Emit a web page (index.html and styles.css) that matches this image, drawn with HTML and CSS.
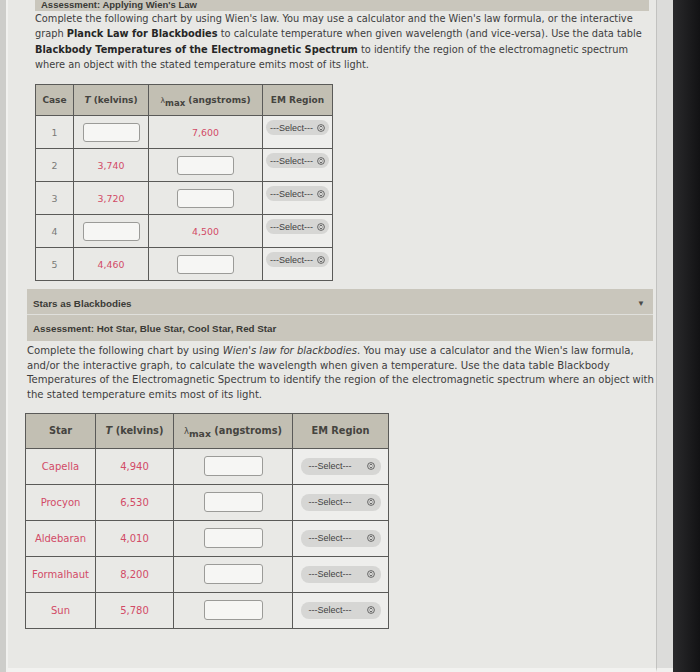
FILE: index.html
```html
<!DOCTYPE html>
<html>
<head>
<meta charset="utf-8">
<link rel="stylesheet" href="styles.css">
</head>
<body>
<div class="screen">
  <div class="left-edge"></div>
  <div class="panel">
    <div class="section1">
      <div class="bar bar-top"><span>Assessment: Applying Wien's Law</span></div>
      <p class="para para1">Complete the following chart by using Wien's law. You may use a calculator and the Wien's law formula, or the interactive graph <b>Planck Law for Blackbodies</b> to calculate temperature when given wavelength (and vice-versa). Use the data table <b>Blackbody Temperatures of the Electromagnetic Spectrum</b> to identify the region of the electromagnetic spectrum where an object with the stated temperature emits most of its light.</p>
      <table class="grid grid1">
        <colgroup><col class="c1a"><col class="c1b"><col class="c1c"><col class="c1d"></colgroup>
        <thead>
          <tr><th>Case</th><th><i>T</i> (kelvins)</th><th><span class="lam">λ</span><sub>max</sub> (angstroms)</th><th>EM Region</th></tr>
        </thead>
        <tbody>
          <tr><td class="num">1</td><td><span class="box"></span></td><td class="red">7,600</td><td class="em"><span class="sel">---Select---<svg viewBox="0 0 8 8"><circle cx="4" cy="4" r="3.4"/><path d="M2.6 3.3 L4 2 L5.4 3.3 M2.6 4.7 L4 6 L5.4 4.7"/></svg></span></td></tr>
          <tr><td class="num">2</td><td class="red">3,740</td><td><span class="box"></span></td><td class="em"><span class="sel">---Select---<svg viewBox="0 0 8 8"><circle cx="4" cy="4" r="3.4"/><path d="M2.6 3.3 L4 2 L5.4 3.3 M2.6 4.7 L4 6 L5.4 4.7"/></svg></span></td></tr>
          <tr><td class="num">3</td><td class="red">3,720</td><td><span class="box"></span></td><td class="em"><span class="sel">---Select---<svg viewBox="0 0 8 8"><circle cx="4" cy="4" r="3.4"/><path d="M2.6 3.3 L4 2 L5.4 3.3 M2.6 4.7 L4 6 L5.4 4.7"/></svg></span></td></tr>
          <tr><td class="num">4</td><td><span class="box"></span></td><td class="red">4,500</td><td class="em"><span class="sel">---Select---<svg viewBox="0 0 8 8"><circle cx="4" cy="4" r="3.4"/><path d="M2.6 3.3 L4 2 L5.4 3.3 M2.6 4.7 L4 6 L5.4 4.7"/></svg></span></td></tr>
          <tr><td class="num">5</td><td class="red">4,460</td><td><span class="box"></span></td><td class="em"><span class="sel">---Select---<svg viewBox="0 0 8 8"><circle cx="4" cy="4" r="3.4"/><path d="M2.6 3.3 L4 2 L5.4 3.3 M2.6 4.7 L4 6 L5.4 4.7"/></svg></span></td></tr>
        </tbody>
      </table>
    </div>
    <div class="bar bar-stars"><span>Stars as Blackbodies</span><span class="tri">▼</span></div>
    <div class="bar bar-assess"><span>Assessment: Hot Star, Blue Star, Cool Star, Red Star</span></div>
    <p class="para para2">Complete the following chart by using <i>Wien's law for blackbodies</i>. You may use a calculator and the Wien's law formula, and/or the interactive graph, to calculate the wavelength when given a temperature. Use the data table Blackbody Temperatures of the Electromagnetic Spectrum to identify the region of the electromagnetic spectrum where an object with the stated temperature emits most of its light.</p>
    <table class="grid grid2">
      <colgroup><col class="c2a"><col class="c2b"><col class="c2c"><col class="c2d"></colgroup>
      <thead>
        <tr><th>Star</th><th><i>T</i> (kelvins)</th><th><span class="lam">λ</span><sub>max</sub> (angstroms)</th><th>EM Region</th></tr>
      </thead>
      <tbody>
        <tr><td class="red">Capella</td><td class="red">4,940</td><td><span class="box"></span></td><td class="em"><span class="sel">---Select---<svg viewBox="0 0 8 8"><circle cx="4" cy="4" r="3.4"/><path d="M2.6 3.3 L4 2 L5.4 3.3 M2.6 4.7 L4 6 L5.4 4.7"/></svg></span></td></tr>
        <tr><td class="red">Procyon</td><td class="red">6,530</td><td><span class="box"></span></td><td class="em"><span class="sel">---Select---<svg viewBox="0 0 8 8"><circle cx="4" cy="4" r="3.4"/><path d="M2.6 3.3 L4 2 L5.4 3.3 M2.6 4.7 L4 6 L5.4 4.7"/></svg></span></td></tr>
        <tr><td class="red">Aldebaran</td><td class="red">4,010</td><td><span class="box"></span></td><td class="em"><span class="sel">---Select---<svg viewBox="0 0 8 8"><circle cx="4" cy="4" r="3.4"/><path d="M2.6 3.3 L4 2 L5.4 3.3 M2.6 4.7 L4 6 L5.4 4.7"/></svg></span></td></tr>
        <tr><td class="red">Formalhaut</td><td class="red">8,200</td><td><span class="box"></span></td><td class="em"><span class="sel">---Select---<svg viewBox="0 0 8 8"><circle cx="4" cy="4" r="3.4"/><path d="M2.6 3.3 L4 2 L5.4 3.3 M2.6 4.7 L4 6 L5.4 4.7"/></svg></span></td></tr>
        <tr><td class="red">Sun</td><td class="red">5,780</td><td><span class="box"></span></td><td class="em"><span class="sel">---Select---<svg viewBox="0 0 8 8"><circle cx="4" cy="4" r="3.4"/><path d="M2.6 3.3 L4 2 L5.4 3.3 M2.6 4.7 L4 6 L5.4 4.7"/></svg></span></td></tr>
      </tbody>
    </table>
  </div>
  <div class="right-strip"></div>
  <div class="bezel"></div>
</div>
</body>
</html>
```
FILE: styles.css
```css
html, body {
  margin: 0;
  padding: 0;
  background: #1b1b1d;
}
.screen {
  display: flex;
  width: 700px;
  height: 672px;
  overflow: hidden;
}
.left-edge {
  width: 6px;
  flex: none;
  background: #cdcdca;
  border-right: 2px solid #f1f1ef;
}
.panel {
  width: 648px;
  flex: none;
  background: #e8e8e5;
  padding-left: 19px;
  padding-right: 6px;
  box-sizing: border-box;
  box-shadow: inset 0 -4px 0 #f2f2f0;
  font-family: "DejaVu Sans", Verdana, sans-serif;
  color: #3c3c3c;
}
.right-strip {
  width: 16px;
  flex: none;
  background: #dcdcda;
  border-left: 1px solid #c2c2c0;
  border-bottom: 4px solid #f0f0ee;
}
.bezel {
  flex: 1;
  background: linear-gradient(90deg, #2a2a2c, #121214);
}
.bar {
  background: #c9c6bc;
  font-family: "Liberation Sans", Arial, sans-serif;
  font-weight: bold;
  font-size: 9.8px;
  color: #3a3a36;
  display: flex;
  align-items: center;
  justify-content: space-between;
  padding: 0 8px 0 6px;
}
.bar-top {
  height: 11px;
  font-size: 9.5px;
  line-height: 10px;
  align-items: flex-start;
  margin-right: 1px;
}
.section1 {
  padding-left: 8px;
}
.para {
  margin: 0;
  line-height: 15.3px;
  color: #3d3d3d;
}
.para b {
  color: #262626;
}
.para1 {
  font-size: 9.8px;
  padding-right: 2px;
}
.grid {
  border-collapse: collapse;
  table-layout: fixed;
}
.grid1 {
  margin-top: 12px;
  width: 297px;
}
.c1a { width: 38px; }
.c1b { width: 75px; }
.c1c { width: 114px; }
.c1d { width: 70px; }
.grid th {
  background: #c2bfb3;
  color: #45443f;
  font-weight: bold;
  border: 1px solid #5a5a58;
  padding: 0;
  white-space: nowrap;
}
.grid td {
  background: #e9e9e6;
  border: 1px solid #5a5a58;
  text-align: center;
  padding: 0;
}
.grid td.em {
  background: #eeeeec;
}
.grid1 thead tr {
  height: 31px;
}
.grid1 th {
  font-size: 9px;
}
.grid1 tbody tr {
  height: 33px;
}
.grid1 td {
  font-size: 9.4px;
}
.grid1 td.em {
  vertical-align: top;
  padding-top: 4px;
}
.lam {
  font-weight: normal;
  font-size: 0.85em;
}
.grid sub {
  font-size: 0.95em;
  vertical-align: -3px;
  line-height: 0;
}
.num {
  color: #7a7a78;
}
.red {
  color: #d24b66;
}
.box {
  display: inline-block;
  width: 55px;
  height: 17px;
  background: #f6f6f4;
  border: 1px solid #9b9b98;
  border-radius: 3px;
  vertical-align: middle;
}
.sel {
  display: inline-flex;
  align-items: center;
  justify-content: space-between;
  gap: 3px;
  background: #d6d6d4;
  border-radius: 8px;
  height: 15px;
  width: 63px;
  box-sizing: border-box;
  padding: 0 4px 0 4px;
  font-family: "Liberation Sans", Arial, sans-serif;
  font-size: 9px;
  color: #3f3f3f;
  vertical-align: middle;
}
.sel svg {
  width: 8px;
  height: 8px;
  flex: none;
  fill: none;
  stroke: #5a5a5a;
  stroke-width: 0.9;
}
.bar-stars {
  margin-top: 8px;
  height: 26px;
  border-bottom: 1px solid #e0e0dc;
  margin-right: -3px;
  padding-top: 4px;
  box-sizing: border-box;
}
.tri {
  font-size: 8px;
  color: #4a4a48;
}
.bar-assess {
  height: 26px;
  margin-right: -3px;
  padding-top: 1px;
  box-sizing: border-box;
}
.para2 {
  font-size: 10.1px;
  margin-top: 3px;
  margin-right: -8px;
  line-height: 14.6px;
}
.grid2 {
  margin-top: 10px;
  margin-left: -2px;
  width: 363px;
}
.c2a { width: 70px; }
.c2b { width: 78px; }
.c2c { width: 119px; }
.c2d { width: 96px; }
.grid2 thead tr {
  height: 35px;
}
.grid2 th {
  font-size: 9.8px;
}
.grid2 tbody tr {
  height: 36px;
}
.grid2 td {
  font-size: 10px;
}
.grid2 .box {
  width: 57px;
  height: 18px;
}
.grid2 .sel {
  width: 80px;
  height: 17px;
  padding: 0 6px 0 8px;
}
```
